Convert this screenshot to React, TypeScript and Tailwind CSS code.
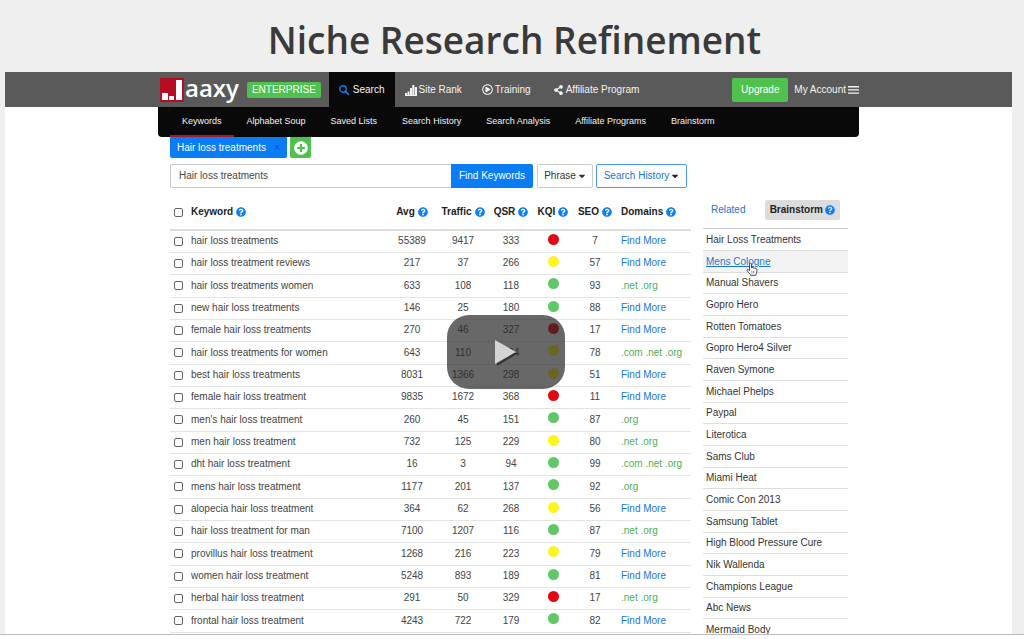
import React from 'react';
import { FaCaretDown, FaPlusCircle, FaQuestionCircle, FaRegPlayCircle, FaSearch, FaShareAlt } from 'react-icons/fa';

type Quality = 'red' | 'yellow' | 'green';

interface KeywordRow {
  keyword: string;
  avg: number;
  traffic: number;
  qsr: number;
  kqi: Quality;
  seo: number;
  domains?: string;
}

const rows: KeywordRow[] = [
  { keyword: 'hair loss treatments', avg: 55389, traffic: 9417, qsr: 333, kqi: 'red', seo: 7 },
  { keyword: 'hair loss treatment reviews', avg: 217, traffic: 37, qsr: 266, kqi: 'yellow', seo: 57 },
  { keyword: 'hair loss treatments women', avg: 633, traffic: 108, qsr: 118, kqi: 'green', seo: 93, domains: '.net .org' },
  { keyword: 'new hair loss treatments', avg: 146, traffic: 25, qsr: 180, kqi: 'green', seo: 88 },
  { keyword: 'female hair loss treatments', avg: 270, traffic: 46, qsr: 327, kqi: 'red', seo: 17 },
  { keyword: 'hair loss treatments for women', avg: 643, traffic: 110, qsr: 294, kqi: 'yellow', seo: 78, domains: '.com .net .org' },
  { keyword: 'best hair loss treatments', avg: 8031, traffic: 1366, qsr: 298, kqi: 'yellow', seo: 51 },
  { keyword: 'female hair loss treatment', avg: 9835, traffic: 1672, qsr: 368, kqi: 'red', seo: 11 },
  { keyword: "men's hair loss treatment", avg: 260, traffic: 45, qsr: 151, kqi: 'green', seo: 87, domains: '.org' },
  { keyword: 'men hair loss treatment', avg: 732, traffic: 125, qsr: 229, kqi: 'yellow', seo: 80, domains: '.net .org' },
  { keyword: 'dht hair loss treatment', avg: 16, traffic: 3, qsr: 94, kqi: 'green', seo: 99, domains: '.com .net .org' },
  { keyword: 'mens hair loss treatment', avg: 1177, traffic: 201, qsr: 137, kqi: 'green', seo: 92, domains: '.org' },
  { keyword: 'alopecia hair loss treatment', avg: 364, traffic: 62, qsr: 268, kqi: 'yellow', seo: 56 },
  { keyword: 'hair loss treatment for man', avg: 7100, traffic: 1207, qsr: 116, kqi: 'green', seo: 87, domains: '.net .org' },
  { keyword: 'provillus hair loss treatment', avg: 1268, traffic: 216, qsr: 223, kqi: 'yellow', seo: 79 },
  { keyword: 'women hair loss treatment', avg: 5248, traffic: 893, qsr: 189, kqi: 'green', seo: 81 },
  { keyword: 'herbal hair loss treatment', avg: 291, traffic: 50, qsr: 329, kqi: 'red', seo: 17, domains: '.net .org' },
  { keyword: 'frontal hair loss treatment', avg: 4243, traffic: 722, qsr: 179, kqi: 'green', seo: 82 },
];

const dotColors: Record<Quality, string> = {
  red: 'bg-[#e30613]',
  yellow: 'bg-[#fdf51e]',
  green: 'bg-[#5fc765]',
};

const subNav = [
  'Keywords',
  'Alphabet Soup',
  'Saved Lists',
  'Search History',
  'Search Analysis',
  'Affiliate Programs',
  'Brainstorm',
];

const ideas = [
  'Hair Loss Treatments',
  'Mens Cologne',
  'Manual Shavers',
  'Gopro Hero',
  'Rotten Tomatoes',
  'Gopro Hero4 Silver',
  'Raven Symone',
  'Michael Phelps',
  'Paypal',
  'Literotica',
  'Sams Club',
  'Miami Heat',
  'Comic Con 2013',
  'Samsung Tablet',
  'High Blood Pressure Cure',
  'Nik Wallenda',
  'Champions League',
  'Abc News',
  'Mermaid Body',
];

const Help = () => <FaQuestionCircle className="h-2.5 w-2.5 shrink-0 text-[#0d7ff2]" />;

const HeadCell = ({ label, left }: { label: string; left?: boolean }) => (
  <th className="p-0 font-bold">
    <span className={left ? 'flex items-center gap-[3px]' : 'flex items-center justify-center gap-[3px]'}>
      {label}
      <Help />
    </span>
  </th>
);

const Checkbox = ({ label }: { label: string }) => (
  <input
    type="checkbox"
    aria-label={label}
    className="ml-1 block h-[9px] w-[9px] appearance-none rounded-xs border border-[#666] bg-white"
  />
);

const Logo = () => (
  <a href="#" className="flex items-center pl-0.5">
    <svg viewBox="0 0 24 24" className="h-6 w-6" aria-hidden="true">
      <rect width="24" height="24" rx="1" fill="#b50e24" />
      <rect x="2" y="15" width="6" height="7" fill="#fff" />
      <rect x="9" y="18" width="5" height="4" fill="#fff" />
      <rect x="16" y="2" width="6" height="20" fill="#fff" />
    </svg>
    <span className="-mt-1 ml-px font-['Open_Sans',sans-serif] text-[24px] leading-6 font-semibold text-white">aaxy</span>
  </a>
);

const TopBar = () => (
  <header className="bg-[#5a5a5a] text-[#f4f4f4]">
    <div className="mx-auto flex h-[35px] max-w-[701px] items-center">
      <Logo />
      <span className="ml-2 rounded-xs bg-[#4fc14f] px-[5px] leading-4 text-white">ENTERPRISE</span>
      <nav className="ml-2 flex h-full items-center">
        <a href="#" className="flex h-full items-center gap-1 bg-[#090909] px-2.5">
          <svg viewBox="0 0 10 10" className="h-2.5 w-2.5" fill="none" stroke="#0d7ff2" aria-hidden="true">
            <circle cx="4" cy="4" r="3.2" strokeWidth="1.4" />
            <path d="M6.4 6.4l3 3" strokeWidth="1.7" strokeLinecap="round" />
          </svg>
          Search
        </a>
        <a href="#" className="ml-2.5 flex items-center gap-0.5">
          <svg viewBox="0 0 12 12" className="h-3 w-3" fill="currentColor" aria-hidden="true">
            <path d="M0 9h2v3H0zM2.5 7.5h2V12h-2zM5 4h2v8H5zM7.3 1h2v11h-2zM9.8 3H12v9H9.800zM0 11h12v1H0z" />
          </svg>
          Site Rank
        </a>
        <a href="#" className="ml-5 flex items-center gap-0.5">
          <FaRegPlayCircle className="h-[11px] w-[11px]" />
          Training
        </a>
        <a href="#" className="ml-[22px] flex items-center gap-0.5">
          <FaShareAlt className="h-2.5 w-[11px]" />
          Affiliate Program
        </a>
      </nav>
      <button type="button" className="ml-auto h-6 w-14 rounded-xs bg-[#4fc14f] text-white">
        Upgrade
      </button>
      <a href="#" className="ml-1.5 flex items-center gap-0.5">
        My Account
        <svg viewBox="0 0 11 8" className="h-2 w-[11px]" fill="currentColor" aria-hidden="true">
          <path d="M0 0h11v1.4H0zM0 3.2h11v1.4H0zM0 6.4h11v1.4H0z" />
        </svg>
      </a>
    </div>
  </header>
);

const KeywordTable = () => (
  <table className="mt-[7px] w-full table-fixed border-collapse text-center text-[#444]">
    <colgroup>
      <col className="w-[21px]" />
      <col />
      <col className="w-[50px]" />
      <col className="w-[52px]" />
      <col className="w-[44px]" />
      <col className="w-[40px]" />
      <col className="w-[44px]" />
      <col className="w-[74px]" />
    </colgroup>
    <thead>
      <tr className="h-[35px] border-b-2 border-[#ddd] text-[#222]">
        <th className="p-0">
          <Checkbox label="Select all keywords" />
        </th>
        <HeadCell label="Keyword" left />
        <HeadCell label="Avg" />
        <HeadCell label="Traffic" />
        <HeadCell label="QSR" />
        <HeadCell label="KQI" />
        <HeadCell label="SEO" />
        <th className="p-0 pl-1 font-bold">
          <span className="flex items-center gap-[3px]">
            Domains
            <Help />
          </span>
        </th>
      </tr>
    </thead>
    <tbody>
      {rows.map((row) => (
        <tr key={row.keyword} className="h-[22px] border-b border-[#e4e4e4] nth-[3n]:h-[23px]">
          <td className="p-0">
            <Checkbox label={row.keyword} />
          </td>
          <td className="p-0 text-left whitespace-nowrap">{row.keyword}</td>
          <td className="p-0">{row.avg}</td>
          <td className="p-0">{row.traffic}</td>
          <td className="p-0">{row.qsr}</td>
          <td className="p-0 pb-1">
            <span className={`mx-auto block h-[11px] w-[11px] rounded-full ${dotColors[row.kqi]}`} />
          </td>
          <td className="p-0">{row.seo}</td>
          <td className="p-0 pl-1 text-left whitespace-nowrap">
            {row.domains ? (
              <span className="text-[#4fae4f]">{row.domains}</span>
            ) : (
              <a href="#" className="text-[#1b75d0]">
                Find More
              </a>
            )}
          </td>
        </tr>
      ))}
    </tbody>
  </table>
);

const HandCursor = () => (
  <svg viewBox="0 0 12 14" className="absolute top-2 left-10 h-3.5 w-3" aria-hidden="true">
    <path
      d="M3.5 8.5V2.2c0-1.6 2-1.6 2 0V6c.3-.8 1.700-.7 1.800.2.4-.7 1.600-.5 1.700.4.5-.6 1.800-.3 1.800.8v2.400c0 1.600-1 2-1 3.500H4.600c-.1-1.300-2.300-2.800-3.500-4.600-.6-1 .5-1.700 1.300-1z"
      fill="#fff"
      stroke="#333"
      strokeWidth="0.9"
      strokeLinejoin="round"
    />
    <path d="M5.9 9v2.4M7.6 9v2.4" stroke="#555" strokeWidth="0.7" />
  </svg>
);

const Sidebar = () => (
  <aside className="w-[145px] shrink-0 pt-[63px]">
    <div className="flex h-[28px] items-start justify-between pr-2 pl-2">
      <button type="button" className="h-5 text-[#1b75d0]">
        Related
      </button>
      <button type="button" className="flex h-5 items-center gap-0.5 rounded-xs bg-[#dcdcdc] px-[5px] font-bold text-[#222]">
        Brainstorm
        <Help />
      </button>
    </div>
    <ul className="border-t border-[#ccc] text-[#333]">
      {ideas.map((idea) => (
        <li
          key={idea}
          className="flex h-[22px] items-center border-b border-[#ddd] pl-[3px] nth-[3n]:h-[21px] nth-2:bg-[#f3f3f3]"
        >
          {idea === 'Mens Cologne' ? (
            <a href="#" className="relative text-[#1b75d0] underline">
              {idea}
              <HandCursor />
            </a>
          ) : (
            idea
          )}
        </li>
      ))}
    </ul>
  </aside>
);

const PlayButton = () => (
  <div className="absolute inset-0 flex items-center justify-center pr-1.5 pb-0.5">
    <button
      type="button"
      aria-label="Play video"
      className="flex h-[74px] w-[118px] items-center justify-center rounded-[22px] bg-[#282828]/70"
    >
      <svg viewBox="0 0 28 32" className="h-8 w-7" aria-hidden="true">
        <path d="M5 6v24l20-12z" fill="#222" opacity="0.7" />
        <path d="M3 4v24l21-12z" fill="#d4d4d4" />
      </svg>
    </button>
  </div>
);

const App: React.FC = () => {
  return (
    <div className="flex h-screen flex-col overflow-hidden bg-white font-['Liberation_Sans',Arial,sans-serif] text-[10px] leading-4">
      <main className="flex min-h-0 flex-1 flex-col border-b border-[#bbb] bg-[#efefef] pr-3 pl-[5px]">
        <h1 className="pt-4 pb-2 pl-3 text-center font-['Open_Sans',sans-serif] text-[37px] leading-12 font-semibold text-[#3a3a3a]">
          Niche Research Refinement
        </h1>
        <section className="relative min-h-0 flex-1 overflow-hidden bg-white">
          <TopBar />
          <div className="mx-auto max-w-[701px]">
            <nav className="flex h-[30px] gap-px rounded-b-sm bg-[#090909] px-3 text-[9px] text-[#f4f4f4]">
              {subNav.map((item, i) => (
                <a
                  key={item}
                  href="#"
                  className={
                    i === 0
                      ? 'flex items-center border-b-2 border-[#a5182d] px-3 whitespace-nowrap'
                      : 'flex items-center border-b-2 border-transparent px-3 whitespace-nowrap'
                  }
                >
                  {item}
                </a>
              ))}
            </nav>
            <div className="flex gap-3 pr-[11px] pl-3">
              <div className="min-w-0 flex-1">
                <div className="flex h-[21px] gap-[3px] text-white">
                  <div className="flex w-[117px] items-center justify-between rounded-b-xs bg-[#0a7cf5] px-[7px]">
                    Hair loss treatments
                    <button type="button" aria-label="Close tab" className="text-[#0b4f9c]">
                      ×
                    </button>
                  </div>
                  <button
                    type="button"
                    aria-label="Add tab"
                    className="flex w-[21px] items-center justify-center rounded-b-xs bg-[#4fc14f]"
                  >
                    <FaPlusCircle className="h-3.5 w-3.5" />
                  </button>
                </div>
                <form className="mt-1.5 flex h-6 pr-1">
                  <input
                    type="text"
                    aria-label="Keyword"
                    defaultValue="Hair loss treatments"
                    className="min-w-0 flex-1 rounded-l-xs border border-r-0 border-[#ccc] px-2 text-[#444]"
                  />
                  <button type="button" className="w-[82px] rounded-r-xs bg-[#0a7cf5] text-white">
                    Find Keywords
                  </button>
                  <button
                    type="button"
                    className="ml-1 flex w-[56px] items-center justify-center gap-0.5 rounded-xs border border-[#ccc] text-[#333]"
                  >
                    Phrase
                    <FaCaretDown className="h-2.5 w-2" />
                  </button>
                  <button
                    type="button"
                    className="ml-[3px] flex w-[91px] items-center justify-center gap-0.5 rounded-xs border border-[#4b9bef] text-[#1b75d0]"
                  >
                    Search History
                    <FaCaretDown className="h-2.5 w-2 text-[#222]" />
                  </button>
                </form>
                <KeywordTable />
              </div>
              <Sidebar />
            </div>
          </div>
          <PlayButton />
        </section>
      </main>
      <div className="h-1 shrink-0 bg-white" />
    </div>
  );
};

export default App;
